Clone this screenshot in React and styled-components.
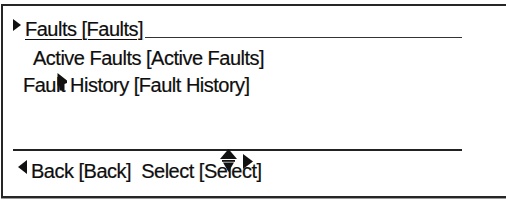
import React from "react";
import styled, { createGlobalStyle } from "styled-components";

const Global = createGlobalStyle`
  html, body { margin: 0; padding: 0; background: #fff; overflow: hidden; }
  body { width: 506px; height: 201px; }
`;

const Screen = styled.div`
  margin: 4px 0 0 1px;
  height: 194px;
  box-sizing: border-box;
  border: 2px solid #262626;
  border-right: none;
  box-shadow: 0 1px 0 #9a9a9a;
  display: flex;
  flex-direction: column;
  padding: 9px 0 0 10px;
  font-family: "Liberation Sans", Arial, sans-serif;
  font-size: 20px;
  letter-spacing: -0.5px;
  color: #0e0e0e;
  -webkit-text-stroke: 0.2px #0e0e0e;
`;

const Menu = styled.div`
  width: 449px;
  display: flex;
  flex-direction: column;
`;

const Row = styled.div`
  display: flex;
  align-items: flex-start;
  height: ${(p) => p.$h}px;
  line-height: 28px;
  padding-left: ${(p) => p.$indent}px;
  white-space: pre;
`;

const Marker = styled.svg`
  flex: none;
  margin-top: ${(p) => p.$top}px;
  margin-right: ${(p) => p.$gap}px;
`;

const Title = styled.span`
  text-decoration: underline;
  text-decoration-thickness: 1px;
  text-underline-offset: 3px;
`;

const Rule = styled.span`
  flex: 1;
  height: 1px;
  background: #333;
  margin: 22px 0 0 2px;
`;

const Covered = styled.span`
  position: relative;
`;

const Overlay = styled.svg`
  position: absolute;
  left: ${(p) => p.$x}px;
  top: ${(p) => p.$y}px;
`;

const Divider = styled.div`
  height: 1.5px;
  background: #222;
  margin-top: ${(p) => p.$top}px;
`;

const Footer = styled.div`
  display: flex;
  align-items: flex-start;
  line-height: 28px;
  margin-top: 6px;
  padding-left: 5px;
  white-space: pre;
`;

export default function App() {
  return (
    <>
      <Global />
      <Screen>
        <Menu>
          <Row $h={29} $indent={0}>
            <Marker width="8" height="12" viewBox="0 0 8 12" $top={4} $gap={4}>
              <polygon points="0,0 8,6 0,12" fill="#111" />
            </Marker>
            <Title>Faults [Faults]</Title>
            <Rule />
          </Row>
          <Row $h={27} $indent={20}>Active Faults [Active Faults]</Row>
          <Row $h={28} $indent={10}>
            <span>
              Faul
              <Covered>
                t
                <Overlay width="11" height="18" viewBox="0 0 11 18" $x={-2.6} $y={-0.8}>
                  <path d="M0.5,0 L10,7.5 L10,10 L7.5,11 L7.5,17.5 L2.5,17.5 L2,12.5 L0.5,12.5 Z" fill="#111" />
                </Overlay>
              </Covered>
              {" History [Fault History]"}
            </span>
          </Row>
          <Divider $top={50} />
          <Footer>
            <Marker width="9" height="14" viewBox="0 0 9 14" $top={3} $gap={4}>
              <polygon points="9,0 0,7 9,14" fill="#111" />
            </Marker>
            <span>
              {"Back [Back]  Select [Se"}
              <Covered>
                l
                <Overlay width="34" height="24" viewBox="0 0 34 24" $x={-7.4} $y={-10.3}>
                  <polygon points="8.5,0 0,10 17,10" fill="#111" />
                  <rect x="2" y="11" width="13" height="1.8" fill="#111" />
                  <polygon points="3,13.5 14,13.5 8.5,23" fill="#111" />
                  <polygon points="23,5 33,12.5 23,20" fill="#111" />
                </Overlay>
              </Covered>
              {"ect]"}
            </span>
          </Footer>
        </Menu>
      </Screen>
    </>
  );
}
